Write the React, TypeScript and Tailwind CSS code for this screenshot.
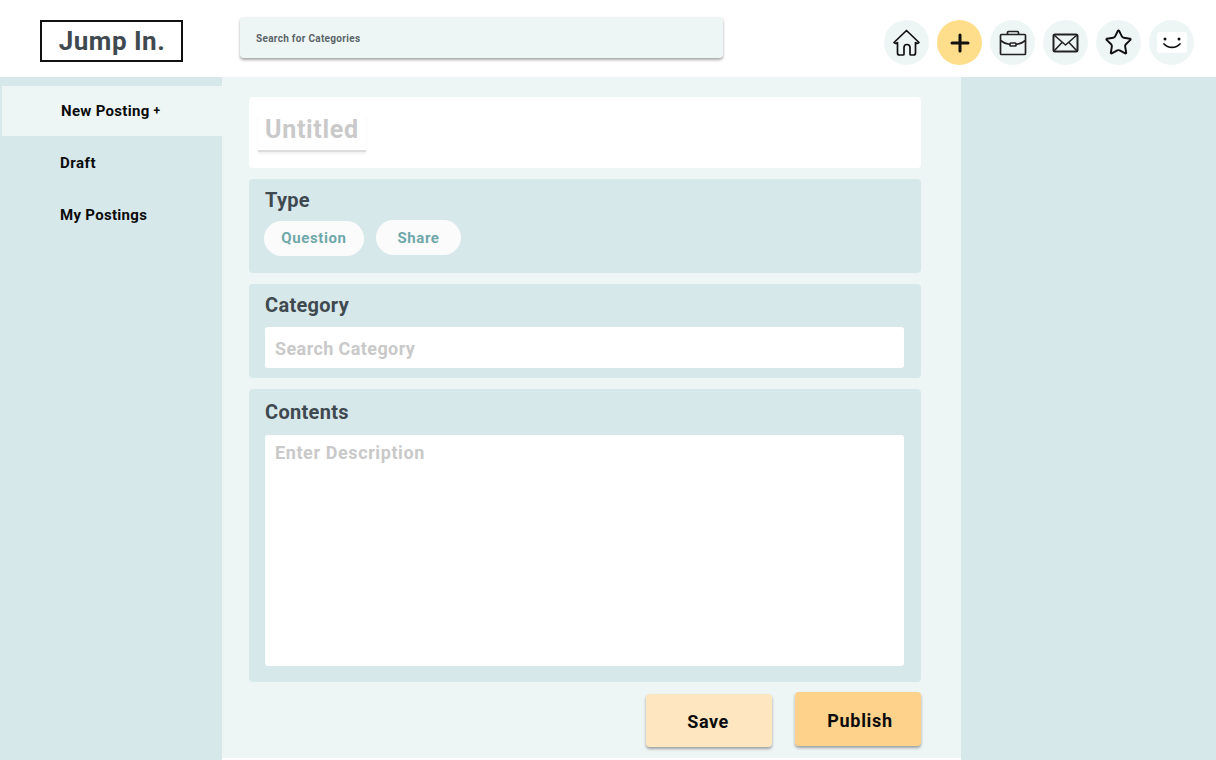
import { Star } from "lucide-react";

const font = { fontFamily: '"Roboto", "Liberation Sans", sans-serif' };

function IconCircle({ children, active }: { children: React.ReactNode; active?: boolean }) {
  return (
    <div
      className={`flex h-[45px] w-[45px] items-center justify-center rounded-full ${
        active ? "bg-[#fedd8b]" : "bg-[#eef6f5]"
      }`}
    >
      {children}
    </div>
  );
}

function Header() {
  return (
    <header className="flex h-[77px] items-start bg-white">
      <div className="mt-[20px] ml-[40px] flex h-[42px] w-[143px] items-center justify-center border-[2.5px] border-[#111] pl-[1px] text-[26px] leading-none font-bold tracking-[0.5px] text-[#3f4a50]">
        Jump In.
      </div>
      <div className="mt-[17px] ml-[57px] flex h-[41px] w-[483px] items-center rounded-[4px] bg-[#eef6f5] pt-[1px] pl-[16px] text-[10px] font-bold tracking-[0.3px] text-[#5a6468] shadow-[0_2px_3px_rgba(0,0,0,0.35)]">
        Search for Categories
      </div>
      <div className="mt-[20px] ml-[161px] flex gap-[8px]">
        <IconCircle>
          <svg width="29" height="29" viewBox="0 0 29 29" fill="none" stroke="#111" strokeWidth="1.7" strokeLinejoin="round" strokeLinecap="round">
            <path d="M2 14.5 14.5 2.5 27 14.5c-.8 1-2 1-3.500.2V25a2 2 0 0 1-2 2h-2.500a1 1 0 0 1-1-1v-6.500a3 3 0 0 0-6 0V26a1 1 0 0 1-1 1H7.500a2 2 0 0 1-2-2V14.700c-1.500.8-2.700.8-3.500-.2Z" />
          </svg>
        </IconCircle>
        <IconCircle active>
          <svg width="20" height="20" viewBox="0 0 20 20" stroke="#111" strokeWidth="3" strokeLinecap="round">
            <path d="M10 2v16M2 10h16" />
          </svg>
        </IconCircle>
        <IconCircle>
          <svg width="28" height="26" viewBox="0 0 28 26" fill="none" stroke="#222" strokeWidth="1.700" strokeLinejoin="round">
            <rect x="1.500" y="4.500" width="25" height="20" rx="1" />
            <path d="M8.500 4.500V2.500a1 1 0 0 1 1-1h9a1 1 0 0 1 1 1V4.500" />
            <path d="M1.500 10.500c3 2.500 7 3.700 9.500 4M26.500 10.500c-3 2.500-7 3.700-9.500 4" />
            <rect x="11" y="13" width="6" height="3" rx="0.800" />
          </svg>
        </IconCircle>
        <IconCircle>
          <svg width="27" height="20" viewBox="0 0 27 20" fill="none" stroke="#222" strokeWidth="2" strokeLinejoin="round">
            <rect x="1.500" y="1.500" width="24" height="17" rx="1.500" />
            <path d="M2 2 13.500 12 25 2M2 18 10 9.500M25 18 17 9.500" strokeWidth="1.600" />
          </svg>
        </IconCircle>
        <IconCircle>
          <Star size={29} strokeWidth={1.6} color="#111" />
        </IconCircle>
        <IconCircle>
          <div className="flex h-[21px] w-[30px] items-center justify-center rounded-[3px] bg-white">
            <svg width="20" height="12" viewBox="0 0 20 12" fill="none" stroke="#111" strokeLinecap="round">
              <circle cx="3" cy="2" r="1.500" fill="#111" stroke="none" />
              <circle cx="17" cy="2" r="1.500" fill="#111" stroke="none" />
              <path d="M2 7c4 4.500 12 4.500 16 0" strokeWidth="1.700" />
            </svg>
          </div>
        </IconCircle>
      </div>
    </header>
  );
}

function Sidebar() {
  return (
    <aside className="w-[222px] shrink-0 bg-[#d7e8eb] pt-[9px] text-[15px] font-bold text-[#0b0b0b]">
      <div className="ml-[2px] flex h-[50px] items-center bg-[#eef6f5] pl-[59px] tracking-[0.3px]">
        New Posting&nbsp;<span className="text-[12px]">+</span>
      </div>
      <div className="mt-[14px] flex h-[26px] items-center pl-[60px] tracking-[0.5px]">Draft</div>
      <div className="mt-[26px] flex h-[26px] items-center pl-[60px] tracking-[0.3px]">My Postings</div>
    </aside>
  );
}

function Section({ className, title, children }: { className: string; title: string; children: React.ReactNode }) {
  return (
    <section className={`mt-[11px] rounded-[4px] bg-[#d7e8eb] pr-[17px] pl-[16px] ${className}`}>
      <h2 className="text-[20px] leading-[24px] font-bold tracking-[0.3px] text-[#3f4a50]">{title}</h2>
      {children}
    </section>
  );
}

export default function App() {
  return (
    <div className="h-[760px] w-[1216px] overflow-hidden bg-white" style={font}>
      <Header />
      <div className="flex h-[683px]">
        <Sidebar />
        <main className="h-[681px] w-[739px] shrink-0 bg-[#eef6f5] pt-[20px] pr-[40px] pl-[27px]">
          <div className="h-[71px] rounded-[4px] bg-white pt-[17px] pl-[9px]">
            <div className="h-[38px] w-[108px] border-b-2 border-[#dcdcdc] pl-[7px] text-[25px] leading-[32px] font-bold tracking-[0.7px] text-[#c9c9c9] shadow-[0_2px_2px_rgba(0,0,0,0.06)]">
              Untitled
            </div>
          </div>
          <Section className="h-[94px] pt-[9px]" title="Type">
            <div className="mt-[9px] -ml-[1px] flex items-start gap-[12px] text-[15px] font-bold tracking-[0.6px] text-[#6fa8aa]">
              <div className="flex h-[35px] w-[100px] items-center justify-center rounded-full bg-[#fbfbfb]">Question</div>
              <div className="-mt-[1px] flex h-[35px] w-[85px] items-center justify-center rounded-full bg-[#fbfbfb] pt-[2px]">Share</div>
            </div>
          </Section>
          <Section className="h-[94px] pt-[9px]" title="Category">
            <div className="mt-[10px] flex h-[41px] items-center rounded-[3px] bg-white pt-[2px] pl-[10px] text-[18px] font-bold tracking-[0.4px] text-[#c9c9c9]">
              Search Category
            </div>
          </Section>
          <Section className="h-[293px] pt-[11px]" title="Contents">
            <div className="mt-[11px] h-[231px] rounded-[3px] bg-white pt-[6px] pl-[10px] text-[18px] leading-[24px] font-bold tracking-[0.6px] text-[#c9c9c9]">
              Enter Description
            </div>
          </Section>
          <div className="mt-[10px] flex items-start justify-end gap-[23px] text-[18px] font-bold text-[#0b0b0b]">
            <div className="mt-[2px] flex h-[53px] w-[126px] items-center justify-center rounded-[4px] bg-[#fee7c0] pt-[2px] pr-[2px] tracking-[0.5px] shadow-[0_2px_3px_rgba(0,0,0,0.35)]">Save</div>
            <div className="flex h-[54px] w-[126px] items-center justify-center rounded-[4px] bg-[#fed28b] pt-[2px] pl-[4px] tracking-[0.7px] shadow-[0_2px_3px_rgba(0,0,0,0.35)]">Publish</div>
          </div>
        </main>
        <div className="flex-1 bg-[#d7e8eb]" />
      </div>
    </div>
  );
}
